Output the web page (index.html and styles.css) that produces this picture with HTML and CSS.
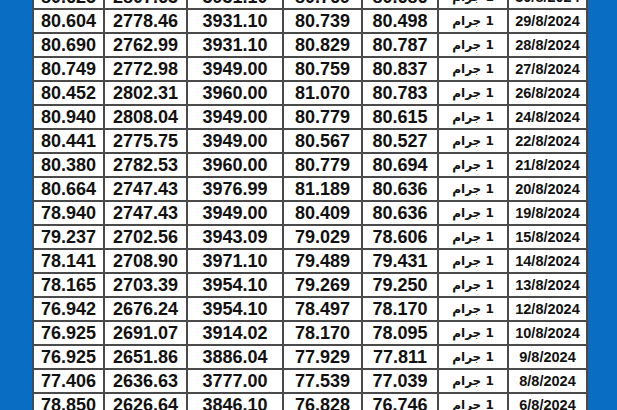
FILE: index.html
```html
<!DOCTYPE html>
<html lang="ar">
<head>
<meta charset="utf-8">
<title>أسعار</title>
<link rel="stylesheet" href="styles.css">
</head>
<body>
<div class="frame">
<table class="prices" dir="ltr">
<colgroup>
<col class="c1"><col class="c2"><col class="c3"><col class="c4"><col class="c5"><col class="c6"><col class="c7">
</colgroup>
<tbody>
<tr><td>80.625</td><td>2807.63</td><td>3931.10</td><td>80.769</td><td>80.686</td><td class="unit">1 جرام</td><td class="date">30/8/2024</td></tr>
<tr><td>80.604</td><td>2778.46</td><td>3931.10</td><td>80.739</td><td>80.498</td><td class="unit">1 جرام</td><td class="date">29/8/2024</td></tr>
<tr><td>80.690</td><td>2762.99</td><td>3931.10</td><td>80.829</td><td>80.787</td><td class="unit">1 جرام</td><td class="date">28/8/2024</td></tr>
<tr><td>80.749</td><td>2772.98</td><td>3949.00</td><td>80.759</td><td>80.837</td><td class="unit">1 جرام</td><td class="date">27/8/2024</td></tr>
<tr><td>80.452</td><td>2802.31</td><td>3960.00</td><td>81.070</td><td>80.783</td><td class="unit">1 جرام</td><td class="date">26/8/2024</td></tr>
<tr><td>80.940</td><td>2808.04</td><td>3949.00</td><td>80.779</td><td>80.615</td><td class="unit">1 جرام</td><td class="date">24/8/2024</td></tr>
<tr><td>80.441</td><td>2775.75</td><td>3949.00</td><td>80.567</td><td>80.527</td><td class="unit">1 جرام</td><td class="date">22/8/2024</td></tr>
<tr><td>80.380</td><td>2782.53</td><td>3960.00</td><td>80.779</td><td>80.694</td><td class="unit">1 جرام</td><td class="date">21/8/2024</td></tr>
<tr><td>80.664</td><td>2747.43</td><td>3976.99</td><td>81.189</td><td>80.636</td><td class="unit">1 جرام</td><td class="date">20/8/2024</td></tr>
<tr><td>78.940</td><td>2747.43</td><td>3949.00</td><td>80.409</td><td>80.636</td><td class="unit">1 جرام</td><td class="date">19/8/2024</td></tr>
<tr><td>79.237</td><td>2702.56</td><td>3943.09</td><td>79.029</td><td>78.606</td><td class="unit">1 جرام</td><td class="date">15/8/2024</td></tr>
<tr><td>78.141</td><td>2708.90</td><td>3971.10</td><td>79.489</td><td>79.431</td><td class="unit">1 جرام</td><td class="date">14/8/2024</td></tr>
<tr><td>78.165</td><td>2703.39</td><td>3954.10</td><td>79.269</td><td>79.250</td><td class="unit">1 جرام</td><td class="date">13/8/2024</td></tr>
<tr><td>76.942</td><td>2676.24</td><td>3954.10</td><td>78.497</td><td>78.170</td><td class="unit">1 جرام</td><td class="date">12/8/2024</td></tr>
<tr><td>76.925</td><td>2691.07</td><td>3914.02</td><td>78.170</td><td>78.095</td><td class="unit">1 جرام</td><td class="date">10/8/2024</td></tr>
<tr><td>76.925</td><td>2651.86</td><td>3886.04</td><td>77.929</td><td>77.811</td><td class="unit">1 جرام</td><td class="date">9/8/2024</td></tr>
<tr><td>77.406</td><td>2636.63</td><td>3777.00</td><td>77.539</td><td>77.039</td><td class="unit">1 جرام</td><td class="date">8/8/2024</td></tr>
<tr><td>78.850</td><td>2626.64</td><td>3846.10</td><td>76.828</td><td>76.746</td><td class="unit">1 جرام</td><td class="date">6/8/2024</td></tr>
</tbody>
</table>
</div>
</body>
</html>
```

FILE: styles.css
```css
html, body {
  margin: 0;
  padding: 0;
  background: #0a6dc4;
  width: 617px;
  height: 410px;
  overflow: hidden;
}

.frame {
  padding-left: 32px;
  height: 410px;
  overflow: hidden;
}

.prices {
  margin-top: -16px;
  width: 556px;
  table-layout: fixed;
  border-collapse: collapse;
  background: #ffffff;
  border: 2px solid #4a4a4a;
}

.c1 { width: 71px; }
.c2 { width: 83px; }
.c3 { width: 96px; }
.c4 { width: 79px; }
.c5 { width: 76px; }
.c6 { width: 70px; }
.c7 { width: 79px; }

.prices tr {
  height: 24px;
}

.prices td {
  border: 2px solid #4a4a4a;
  padding: 0;
  text-align: center;
  vertical-align: middle;
  font-family: "Liberation Sans", Arial, sans-serif;
  font-weight: bold;
  font-size: 18px;
  line-height: 18px;
  color: #111111;
  white-space: nowrap;
  overflow: hidden;
}

.prices td.unit {
  font-family: "DejaVu Sans", "Noto Sans", sans-serif;
  font-weight: bold;
  font-size: 12px;
  direction: rtl;
}

.prices td.date {
  font-size: 14.5px;
}
```
